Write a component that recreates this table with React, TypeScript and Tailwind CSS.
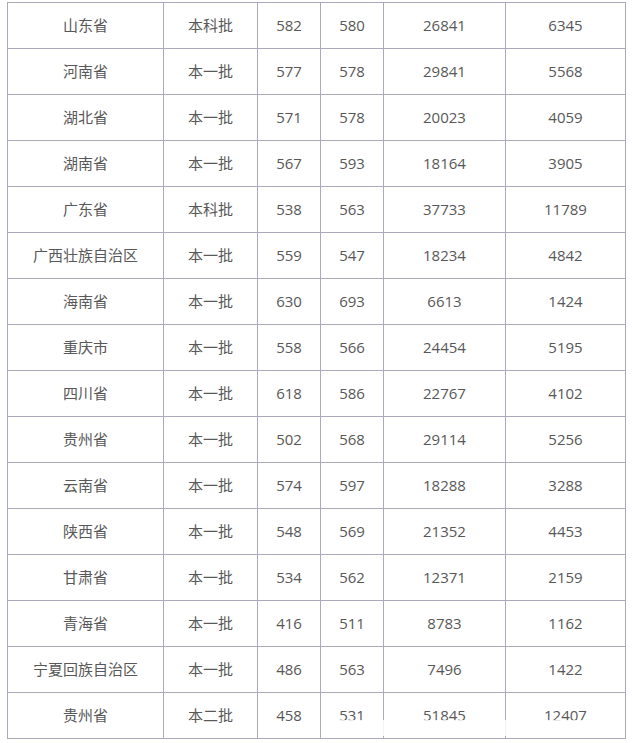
const ROWS = [
  ["山东省", "本科批", "582", "580", "26841", "6345"],
  ["河南省", "本一批", "577", "578", "29841", "5568"],
  ["湖北省", "本一批", "571", "578", "20023", "4059"],
  ["湖南省", "本一批", "567", "593", "18164", "3905"],
  ["广东省", "本科批", "538", "563", "37733", "11789"],
  ["广西壮族自治区", "本一批", "559", "547", "18234", "4842"],
  ["海南省", "本一批", "630", "693", "6613", "1424"],
  ["重庆市", "本一批", "558", "566", "24454", "5195"],
  ["四川省", "本一批", "618", "586", "22767", "4102"],
  ["贵州省", "本一批", "502", "568", "29114", "5256"],
  ["云南省", "本一批", "574", "597", "18288", "3288"],
  ["陕西省", "本一批", "548", "569", "21352", "4453"],
  ["甘肃省", "本一批", "534", "562", "12371", "2159"],
  ["青海省", "本一批", "416", "511", "8783", "1162"],
  ["宁夏回族自治区", "本一批", "486", "563", "7496", "1422"],
  ["贵州省", "本二批", "458", "531", "51845", "12407"],
];

const WIDTHS = ["w-[156px]", "w-[94px]", "w-[63px]", "w-[63px]", "w-[122px]", "w-[120px]"];

export default function App() {
  return (
    <div className="relative min-h-[743px] bg-white pt-[2px] pl-[7px] font-['Open_Sans','Noto_Sans_CJK_SC',sans-serif] text-[15px] text-[#585858]">
      <table className="border-collapse table-fixed w-[619px]">
        <colgroup>
          {WIDTHS.map((w, i) => (
            <col key={i} className={w} />
          ))}
        </colgroup>
        <tbody>
          {ROWS.map((row, r) => (
            <tr key={r} className="h-[46px]">
              {row.map((cell, c) => (
                <td
                  key={c}
                  className="border border-[#aca9ba] text-center align-middle p-0 leading-none"
                >
                  {cell}
                </td>
              ))}
            </tr>
          ))}
        </tbody>
      </table>
      {/* watermark blur over the last row */}
      <div className="absolute left-[330px] top-[720px] w-[290px] h-[16px] bg-white/85" />
    </div>
  );
}
